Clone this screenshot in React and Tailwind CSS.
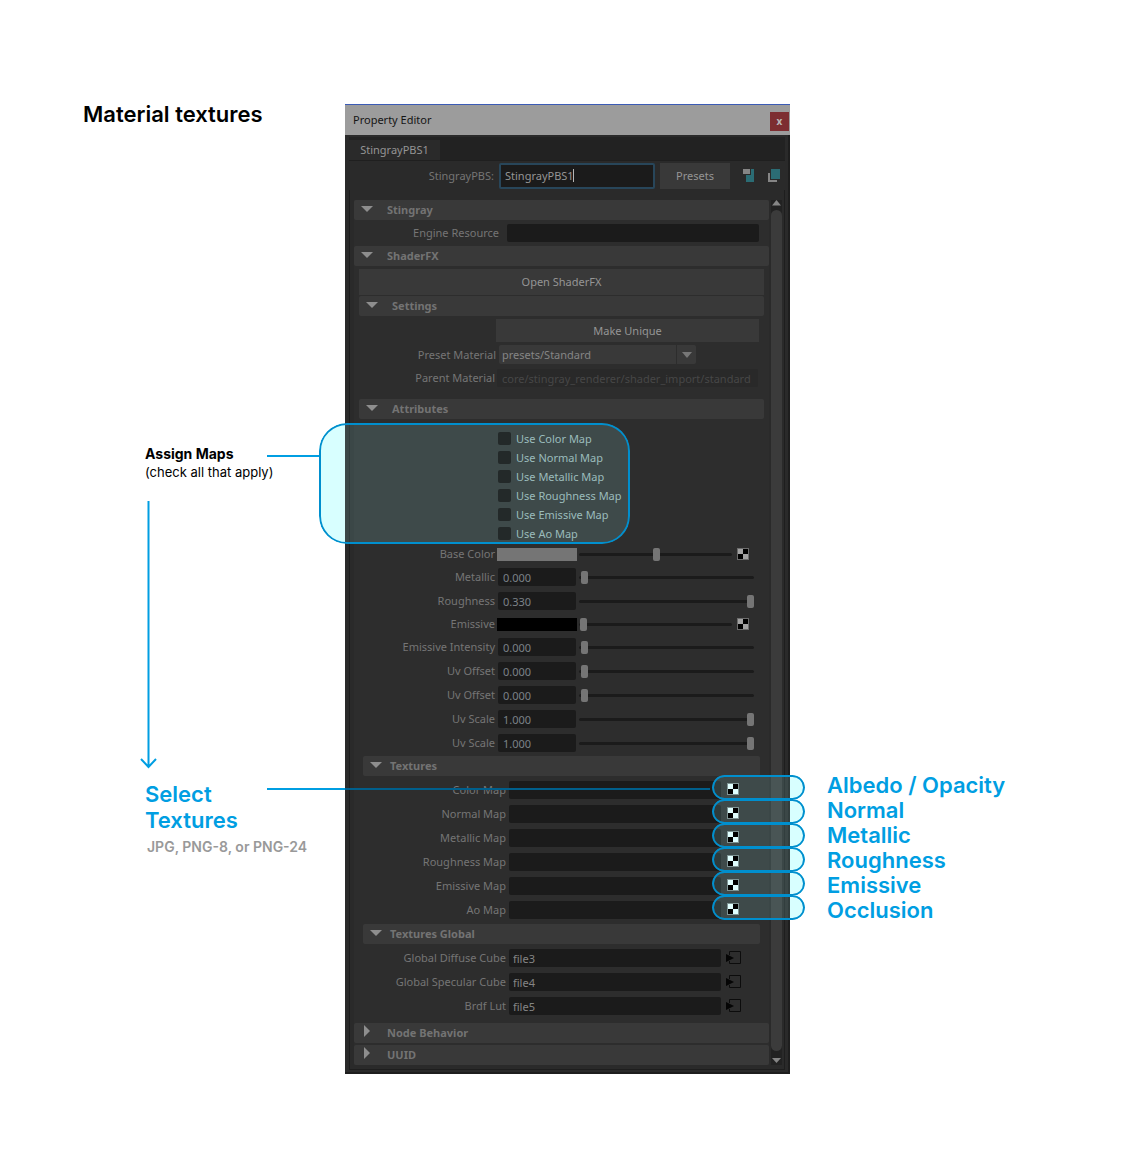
import React from "react";

const MAPS = ["Color Map", "Normal Map", "Metallic Map", "Roughness Map", "Emissive Map", "Ao Map"];
const OUTPUTS = ["Albedo / Opacity", "Normal", "Metallic", "Roughness", "Emissive", "Occlusion"];
const ATTRIBUTES = [
  { label: "Base Color", swatch: "bg-[#757575]", value: 51 },
  { label: "Metallic", number: "0.000", value: 1 },
  { label: "Roughness", number: "0.330", value: 100 },
  { label: "Emissive", swatch: "bg-black", value: 1 },
  { label: "Emissive Intensity", number: "0.000", value: 1 },
  { label: "Uv Offset", number: "0.000", value: 1 },
  { label: "Uv Offset", number: "0.000", value: 1 },
  { label: "Uv Scale", number: "1.000", value: 100 },
  { label: "Uv Scale", number: "1.000", value: 100 },
];
const FILES = [
  ["Global Diffuse Cube", "file3"],
  ["Global Specular Cube", "file4"],
  ["Brdf Lut", "file5"],
];

function Triangle({ closed }) {
  return closed ? (
    <svg className="h-3 w-3 shrink-0" viewBox="0 0 12 12" aria-hidden="true">
      <path d="M3 0l6 6-6 6z" fill="#8e8e8e" />
    </svg>
  ) : (
    <svg className="h-3 w-3 shrink-0" viewBox="0 0 12 12" aria-hidden="true">
      <path d="M0 4h12l-6 6z" fill="#8e8e8e" />
    </svg>
  );
}

function Header({ children, closed, nested, className = "" }) {
  return (
    <button
      type="button"
      aria-expanded={!closed}
      className={`flex h-5 w-full items-center rounded-xs bg-[#393939] pl-[7px] text-left font-bold text-[#737373] ${className}`}
    >
      <span className="-mt-1 flex">
        <Triangle closed={closed} />
      </span>
      <span className={nested ? "ml-2" : "ml-[14px]"}>{children}</span>
    </button>
  );
}

function Checker({ bright }) {
  const light = bright ? "#e0ffff" : "#a3a3a3";
  return (
    <svg className="block h-3 w-3" viewBox="0 0 12 12" aria-hidden="true">
      <path d="M0 0h12v12H0z" fill={bright ? "#7f9494" : "#6b6b6b"} />
      <path d="M1 1h10v10H1z" fill="#000" />
      <path d="M1 1h5v5H1zM6 6h5v5H6z" fill={light} />
    </svg>
  );
}

function Slider({ label, value }) {
  return (
    <input
      type="range"
      aria-label={label}
      defaultValue={value}
      className="h-[13px] min-w-0 flex-1 appearance-none bg-transparent [&::-webkit-slider-runnable-track]:h-[3px] [&::-webkit-slider-runnable-track]:rounded-full [&::-webkit-slider-runnable-track]:bg-[#1b1b1b] [&::-webkit-slider-thumb]:-mt-[5px] [&::-webkit-slider-thumb]:h-[13px] [&::-webkit-slider-thumb]:w-[7px] [&::-webkit-slider-thumb]:appearance-none [&::-webkit-slider-thumb]:rounded-xs [&::-webkit-slider-thumb]:bg-[#757575]"
    />
  );
}

function AttributeRow({ item, id }) {
  const isColor = Boolean(item.swatch);
  return (
    <div className={isColor ? "flex h-[22px] items-center" : "flex h-6 items-center"}>
      <label htmlFor={id} className="w-[136px] shrink-0 text-right">
        {item.label}
      </label>
      {isColor ? (
        <button id={id} type="button" aria-label={item.label} className={`mx-0.5 h-[13px] w-20 shrink-0 ${item.swatch}`} />
      ) : (
        <input
          id={id}
          defaultValue={item.number}
          className="mr-[3px] ml-[3px] h-[18px] w-[78px] shrink-0 rounded-xs bg-[#1b1b1b] px-[5px] text-[#7c8288]"
        />
      )}
      <Slider label={`${item.label} amount`} value={item.value} />
      {isColor ? (
        <button type="button" aria-label={`Map ${item.label}`} className="mr-[15px] ml-[5px]">
          <Checker />
        </button>
      ) : (
        <span className="w-[10px]" />
      )}
    </div>
  );
}

function Legend() {
  return (
    <div className="pt-[101px] font-['Inter',sans-serif]">
      <h1 className="pl-[83px] text-[22px] leading-[26px] font-semibold text-black">Material textures</h1>
      <div className="mt-[318px] mr-[26px] ml-[145px] flex items-start">
        <div className="w-[122px] whitespace-nowrap text-black">
          <h2 className="text-sm leading-[18px] font-bold">Assign Maps</h2>
          <p className="text-[13px] leading-[18px]">(check all that apply)</p>
        </div>
        <div className="mt-[10px] h-0.5 flex-1 bg-[#009ee2]" />
      </div>
      <svg className="mt-5 ml-[140px] h-[268px] w-[17px]" viewBox="0 0 17 268" aria-hidden="true">
        <path d="M8.500 0v266M1 258l7.500 8 7.500-8" fill="none" stroke="#009ee2" strokeWidth="2" />
      </svg>
      <h2 className="mt-3 ml-[145px] w-32 text-[22px] leading-[26px] font-semibold text-[#009ee2]">Select Textures</h2>
      <p className="mt-[5px] ml-[147px] text-sm leading-[18px] font-semibold whitespace-nowrap text-[#999]">
        JPG, PNG-8, or PNG-24
      </p>
    </div>
  );
}

function CheckboxGroup() {
  return (
    <div className="relative mt-1 h-[121px]">
      <div className="absolute inset-y-0 -left-10 right-[134px] overflow-hidden rounded-[28px]">
        <div className="flex h-full">
          <div className="w-[26px] bg-[#d8ffff]" />
          <div className="flex-1 bg-[rgba(130,190,190,0.2)]" />
        </div>
        <div className="absolute inset-0 rounded-[28px] border-2 border-[#008fce]" />
      </div>
      <div className="relative flex flex-col pt-[6px] pl-[139px]">
        {MAPS.map((name) => (
          <label key={name} className="flex h-[19px] items-center gap-[5px] whitespace-nowrap text-[#9bbcbc]">
            <input type="checkbox" className="h-[13px] w-[13px] appearance-none rounded-xs bg-[#232929]" />
            Use {name}
          </label>
        ))}
      </div>
    </div>
  );
}

function TextureRow({ name, first }) {
  const id = `tex-${name}`;
  return (
    <div className="relative flex h-6 items-center">
      <label htmlFor={id} className="w-[143px] shrink-0 text-right">
        {name}
      </label>
      <input id={id} className="ml-[3px] h-[18px] min-w-0 flex-1 rounded-xs bg-[#1b1b1b]" />
      <div className="w-[39px]" />
      {first && (
        <div className="absolute top-[10px] right-[50px] -left-24 flex h-0.5">
          <div className="w-[78px] bg-[#009ee2]" />
          <div className="flex-1 bg-[#005f8c]" />
        </div>
      )}
      <div className="absolute -top-[3px] -right-[45px] h-[25px] w-[93px] overflow-hidden rounded-full">
        <div className="flex h-full">
          <div className="flex-1 bg-[rgba(130,190,190,0.2)]" />
          <div className="w-[15px] bg-[#d8ffff]" />
        </div>
        <div className="absolute inset-0 rounded-full border-2 border-[#008fce]" />
      </div>
      <button type="button" aria-label={`Choose ${name}`} className="absolute top-[5px] right-[21px]">
        <Checker bright />
      </button>
    </div>
  );
}

function FileRow({ label, value }) {
  return (
    <div className="flex h-6 items-center">
      <label htmlFor={value} className="w-[143px] shrink-0 text-right whitespace-nowrap">
        {label}
      </label>
      <input
        id={value}
        defaultValue={value}
        className="ml-[3px] h-[18px] min-w-0 flex-1 rounded-xs bg-[#1b1b1b] px-1 text-[#858585]"
      />
      <button type="button" aria-label={`Open ${label}`} className="mr-[19px] ml-[5px]">
        <svg className="block h-[14px] w-[15px]" viewBox="0 0 15 14" aria-hidden="true">
          <path d="M3.500 4V.5h11v12h-11V10" fill="none" stroke="#0c0c0c" />
          <path d="M0 3l8 4-8 4z" fill="#050505" />
        </svg>
      </button>
    </div>
  );
}

function Sections() {
  return (
    <div className="min-w-0 flex-1 bg-[#2d2d2d]">
      <Header>Stingray</Header>
      <div className="flex h-[26px] items-center pr-[10px]">
        <label htmlFor="engine" className="w-[145px] text-right">
          Engine Resource
        </label>
        <input id="engine" className="ml-2 h-[18px] min-w-0 flex-1 rounded-xs bg-[#1b1b1b]" />
      </div>
      <Header>ShaderFX</Header>
      <div className="px-[5px] pt-[3px]">
        <button type="button" className="block h-[26px] w-full bg-[#393939] text-[#959595]">
          Open ShaderFX
        </button>
        <Header className="mt-px">Settings</Header>
        <div className="pt-[3px] pr-[5px] pl-[137px]">
          <button type="button" className="block h-[23px] w-full bg-[#393939] text-[#959595]">
            Make Unique
          </button>
        </div>
        <div className="mt-[3px] flex h-[19px] items-center">
          <label htmlFor="preset" className="w-[137px] shrink-0 text-right">
            Preset Material
          </label>
          <div className="relative ml-[3px] w-[197px]">
            <select id="preset" className="block h-[19px] w-full appearance-none rounded-xs bg-[#393939] pl-[3px] text-[#858585]">
              <option>presets/Standard</option>
            </select>
            <div className="pointer-events-none absolute inset-y-0 right-0 flex w-5 items-center justify-center border-l border-[#2d2d2d]">
              <svg className="h-[6px] w-[10px]" viewBox="0 0 10 6" aria-hidden="true">
                <path d="M0 0h10L5 6z" fill="#777" />
              </svg>
            </div>
          </div>
        </div>
        <div className="mt-[5px] flex h-[18px] items-center pr-[6px]">
          <label htmlFor="parent" className="w-[136px] shrink-0 text-right">
            Parent Material
          </label>
          <input
            id="parent"
            disabled
            defaultValue="core/stingray_renderer/shader_import/standard"
            className="ml-0.5 h-[18px] min-w-0 flex-1 rounded-xs bg-[#292929] px-[5px] text-[#474747]"
          />
        </div>
        <Header className="mt-3">Attributes</Header>
        <CheckboxGroup />
        <div className="-mt-px pb-px">
          {ATTRIBUTES.map((item, i) => (
            <AttributeRow key={i} id={`attr-${i}`} item={item} />
          ))}
        </div>
        <div className="px-1">
          <Header nested>Textures</Header>
          <div className="py-0.5">
            {MAPS.map((name, i) => (
              <TextureRow key={name} name={name} first={i === 0} />
            ))}
          </div>
          <Header nested>Textures Global</Header>
          <div className="pt-0.5 pb-[5px]">
            {FILES.map(([label, value]) => (
              <FileRow key={value} label={label} value={value} />
            ))}
          </div>
        </div>
      </div>
      <Header closed>Node Behavior</Header>
      <Header closed className="mt-0.5">
        UUID
      </Header>
    </div>
  );
}

function ScrollBar() {
  return (
    <div className="mx-0.5 flex w-[11px] flex-col items-center bg-[#222]">
      <svg className="h-[10px] w-[9px]" viewBox="0 0 9 10" aria-hidden="true">
        <path d="M0 5.500h9L4.500 0z" fill="#858585" />
      </svg>
      <div className="w-full flex-1 rounded-full bg-[#3b3b3b]" />
      <svg className="h-[14px] w-[9px]" viewBox="0 0 9 14" aria-hidden="true">
        <path d="M0 7h9l-4.500 5z" fill="#858585" />
      </svg>
    </div>
  );
}

function PropertyEditor() {
  return (
    <section className="mt-[104px] border-t border-[#3b5bb5] font-['Noto_Sans',sans-serif] text-[11px] leading-4 text-[#757575]">
      <header className="flex h-[30px] items-center justify-between bg-[#9c9c9c] pr-px pl-2">
        <h2 className="text-[#151515]">Property Editor</h2>
        <button type="button" aria-label="Close" className="mt-0.5 h-[19px] w-[19px] bg-[#7d2e31] text-[10px] leading-[18px] font-bold text-[#b9b9b9]">
          x
        </button>
      </header>
      <div className="border-r-2 border-b-2 border-[#1e1e1e] bg-[#2a2a2a] pt-0.5 pr-[3px] pb-0.5 pl-1">
        <div role="tablist" className="flex h-6 items-end border-b border-[#1f1f1f] bg-[#222]">
          <button type="button" role="tab" aria-selected="true" className="h-5 w-[91px] bg-[#2a2a2a] text-[#959595]">
            StingrayPBS1
          </button>
        </div>
        <div className="flex h-[29px] items-center">
          <label htmlFor="node-name" className="w-[145px] shrink-0 text-right">
            StingrayPBS:
          </label>
          <div className="ml-[5px] flex h-[26px] min-w-0 flex-1 items-center rounded-xs border-2 border-[#28465a] bg-[#1b1b1b] px-1">
            <input id="node-name" size={12} defaultValue="StingrayPBS1" className="w-[70px] bg-transparent text-[#959595]" />
            <span className="-ml-0.5 h-[13px] w-px bg-[#b5b5b5]" />
          </div>
          <button type="button" className="ml-[5px] h-[26px] w-[70px] bg-[#393939] text-[#959595]">
            Presets
          </button>
          <button type="button" aria-label="Input connections" className="ml-[13px]">
            <svg className="block h-[13px] w-[11px]" viewBox="0 0 11 13" aria-hidden="true">
              <path d="M3 0h8v13H3z" fill="#2b6c74" />
              <path d="M0 0h8v6H0z" fill="#2a2a2a" />
              <path d="M0 0h7v5H0z" fill="#858585" />
              <path d="M8 0h3v6H8z" fill="#2b6c74" />
            </svg>
          </button>
          <button type="button" aria-label="Output connections" className="mr-[5px] ml-[14px]">
            <svg className="block h-[13px] w-3" viewBox="0 0 12 13" aria-hidden="true">
              <path d="M0 4h2v7h7v2H0z" fill="#858585" />
              <path d="M3 0h9v10H3z" fill="#2b6c74" />
            </svg>
          </button>
        </div>
        <div className="flex border-x border-b border-[#1e1e1e] pt-[10px] pb-1 pl-1">
          <Sections />
          <ScrollBar />
        </div>
      </div>
    </section>
  );
}

export default function App() {
  return (
    <main className="grid min-h-screen grid-cols-[345fr_445fr_352fr] items-start bg-white">
      <Legend />
      <PropertyEditor />
      <ul className="pt-[773px] pl-[37px] font-['Inter',sans-serif] text-[22px] leading-[25px] font-semibold text-[#009ee2]">
        {OUTPUTS.map((name) => (
          <li key={name}>{name}</li>
        ))}
      </ul>
    </main>
  );
}
